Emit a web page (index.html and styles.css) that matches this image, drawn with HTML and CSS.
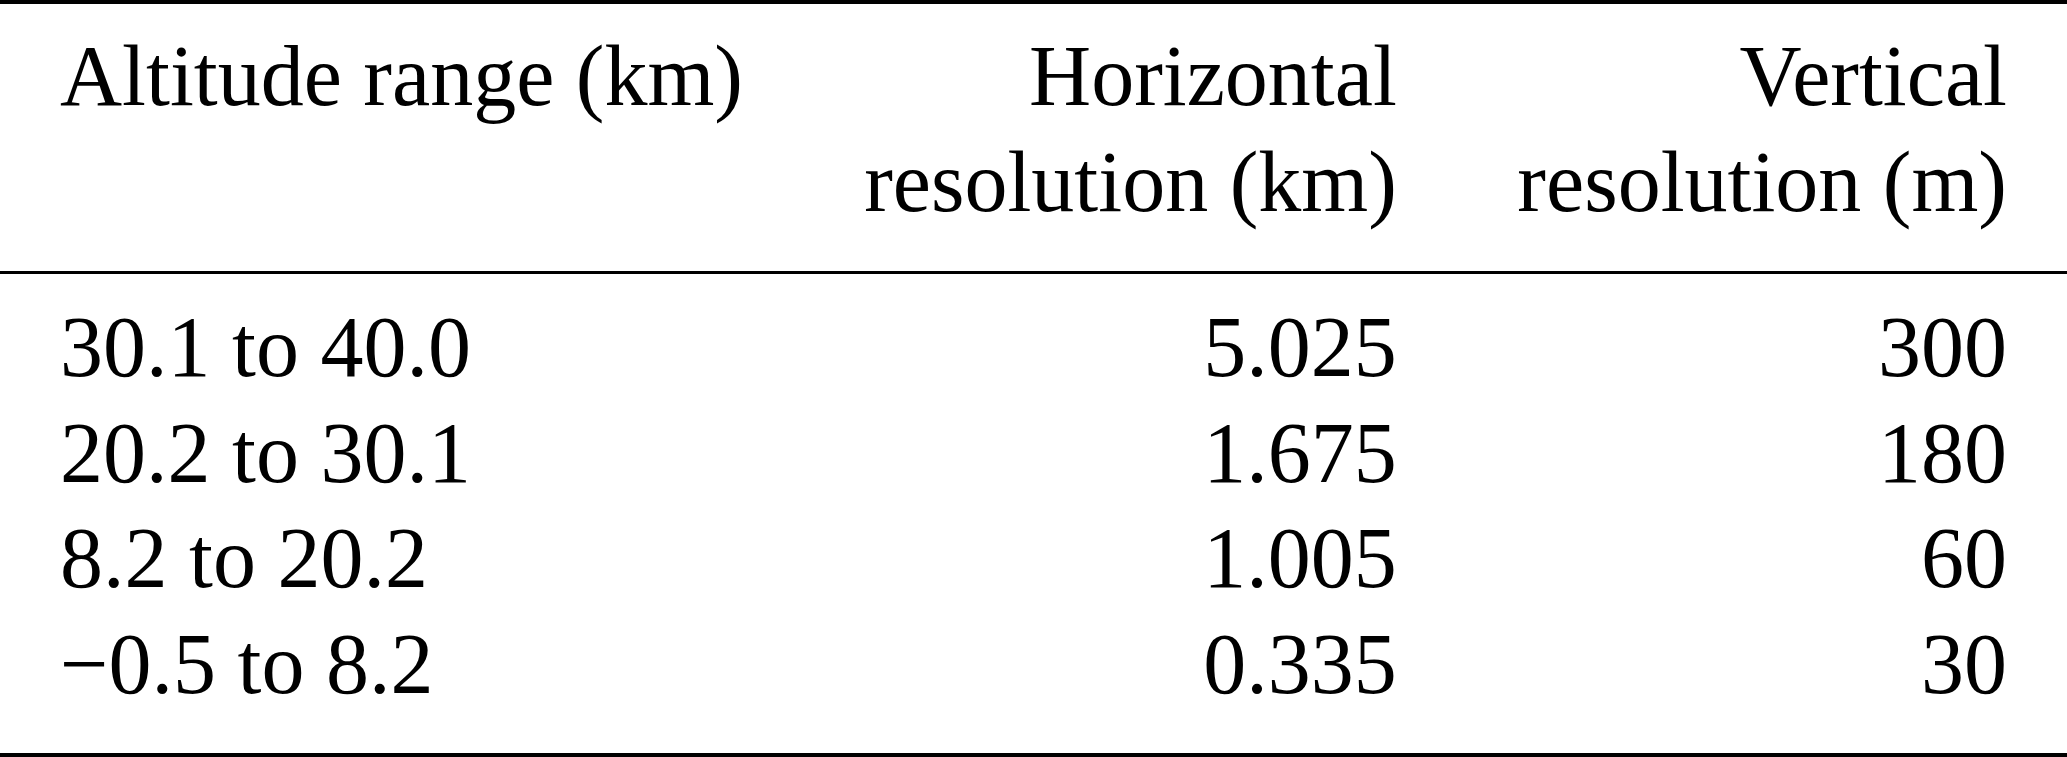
FILE: index.html
```html
<!DOCTYPE html>
<html lang="en">
  <head>
    <meta charset="UTF-8" />
    <meta name="viewport" content="width=device-width, initial-scale=1.0" />
    <title>Resolution by altitude</title>
    <link rel="stylesheet" href="styles.css">
  </head>
  <body>
    <table class="res-table">
      <thead>
        <tr>
          <th class="left">Altitude range (km)</th>
          <th class="num">Horizontal<br />resolution (km)</th>
          <th class="num">Vertical<br />resolution (m)</th>
        </tr>
      </thead>
      <tbody>
        <tr>
          <td class="left">30.1 to 40.0</td>
          <td class="num">5.025</td>
          <td class="num">300</td>
        </tr>
        <tr>
          <td class="left">20.2 to 30.1</td>
          <td class="num">1.675</td>
          <td class="num">180</td>
        </tr>
        <tr>
          <td class="left">8.2 to 20.2</td>
          <td class="num">1.005</td>
          <td class="num">60</td>
        </tr>
        <tr>
          <td class="left">&minus;0.5 to 8.2</td>
          <td class="num">0.335</td>
          <td class="num">30</td>
        </tr>
      </tbody>
    </table>
  </body>
</html>
```

FILE: styles.css
```css
* {
  margin: 0;
  padding: 0;
  box-sizing: border-box;
}
body {
  background-color: white;
  color: #000;
  font-family: "Liberation Serif", "Times New Roman", serif;
}
.res-table {
  width: 100%;
  border-collapse: separate;
  border-spacing: 0;
  font-size: 86px;
  line-height: 105.5px;
}
.res-table th,
.res-table td {
  font-weight: normal;
  padding: 0 60px;
  vertical-align: top;
  white-space: nowrap;
}
.res-table th {
  border-top: 4px solid #000;
  border-bottom: 3px solid #000;
  padding-top: 20px;
  padding-bottom: 36px;
}
.res-table tbody tr:first-child td {
  padding-top: 21px;
}
.res-table tbody tr:last-child td {
  padding-bottom: 36px;
  border-bottom: 4px solid #000;
}
.left {
  text-align: left;
}
.num {
  text-align: right;
}
```
